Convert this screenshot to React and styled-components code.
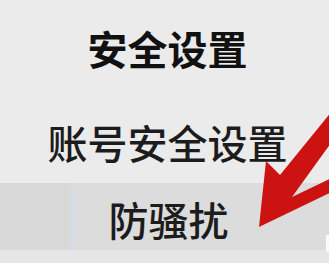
import React from "react";
import styled, { createGlobalStyle } from "styled-components";

const GlobalStyle = createGlobalStyle`
  html, body {
    margin: 0;
    padding: 0;
    background: #ebebeb;
  }
  body {
    font-family: "Noto Sans CJK SC", "Noto Sans", sans-serif;
  }
`;

const menu = [
  { label: "账号安全设置", active: false },
  { label: "防骚扰", active: true },
];

function App() {
  return (
    <>
      <GlobalStyle />
      <Page>
        <Menu>
          <Heading>安全设置</Heading>
          {menu.map((item) => (
            <Item key={item.label} $active={item.active}>
              {item.active && <Edge />}
              <Label $active={item.active}>{item.label}</Label>
            </Item>
          ))}
          <Footer />
        </Menu>
        <Arrow viewBox="0 0 329 263" aria-hidden="true">
          <polygon
            points="259,227 266,161 280,175 336,106 336,136 292,197 336,176 336,190"
            fill="#cd1212"
          />
        </Arrow>
        <Nub />
      </Page>
    </>
  );
}

const Page = styled.div`
  position: relative;
  width: 329px;
  height: 263px;
  overflow: hidden;
  background: #ebebeb;
`;

const Menu = styled.div`
  display: flex;
  flex-direction: column;
`;

const Heading = styled.div`
  height: 96px;
  line-height: 96px;
  padding-left: 6px;
  text-align: center;
  font-size: 40px;
  font-weight: 700;
  color: #111;
`;

const Item = styled.div`
  position: relative;
  display: flex;
  justify-content: center;
  height: ${(p) => (p.$active ? "67px" : "87px")};
  padding-top: ${(p) => (p.$active ? "6px" : "5px")};
  padding-left: ${(p) => (p.$active ? "8px" : "6px")};
  box-sizing: border-box;
  background: ${(p) => (p.$active ? "#dcdcdd" : "transparent")};
`;

const Edge = styled.span`
  position: absolute;
  left: 0;
  top: 0;
  bottom: 0;
  width: 78px;
  background: linear-gradient(
    to right,
    #d8d8d8 0,
    #d8d8d8 64px,
    #dcd9d2 67px,
    #d6dbe4 72px,
    #dcdcdd 78px
  );
`;

const Label = styled.span`
  position: relative;
  font-size: 40px;
  line-height: ${(p) => (p.$active ? "61px" : "82px")};
  font-weight: 500;
  color: #1c1c1c;
`;

const Footer = styled.div`
  height: 13px;
  background: #e6e6e6;
`;

const Arrow = styled.svg`
  position: absolute;
  left: 0;
  top: 0;
  width: 329px;
  height: 263px;
`;

const Nub = styled.span`
  position: absolute;
  right: 0;
  top: 235px;
  width: 3px;
  height: 17px;
  background: #fafafa;
`;

export default App;
